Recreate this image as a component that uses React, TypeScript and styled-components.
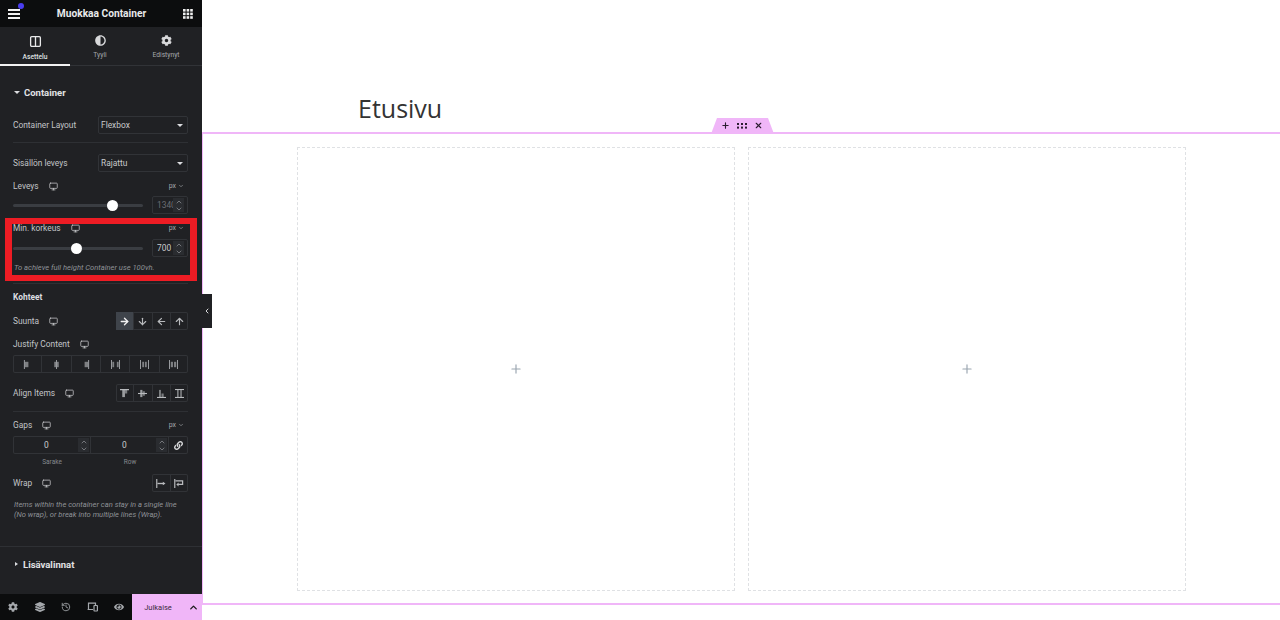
import React from 'react';
import styled, { createGlobalStyle } from 'styled-components';
import { FaAdjust, FaCog, FaEye, FaLayerGroup, FaLink } from 'react-icons/fa';
import {
  ArrowDown,
  ArrowLeft,
  ArrowRight,
  ArrowUp,
  ChevronDown,
  ChevronLeft,
  ChevronUp,
  Columns2,
  History,
  Monitor,
  Plus,
  X,
} from 'lucide-react';

const GlobalStyle = createGlobalStyle`
  html, body { margin: 0; padding: 0; height: 620px; overflow: hidden; background: #fff; }
  * { box-sizing: border-box; }
  body { font-family: Roboto, "Liberation Sans", sans-serif; }
`;

const PINK = '#f0b6f8';
const LINE = '#313337';

const Page = styled.div`
  display: flex;
  width: 1280px;
  height: 620px;
  position: relative;
`;

const Panel = styled.aside`
  width: 202px;
  height: 620px;
  flex: none;
  display: flex;
  flex-direction: column;
  position: relative;
  background: #202124;
  color: #c2c4c7;
  font-size: 8.4px;
`;

const Header = styled.header`
  height: 27px;
  background: #0c0d0e;
  display: flex;
  align-items: center;
  justify-content: space-between;
  padding: 0 9px 0 8px;
  position: relative;
  color: #e8e9ea;
  font-size: 10.2px;
  font-weight: 700;
`;

const Dot = styled.span`
  position: absolute;
  left: 18px;
  top: 3px;
  width: 6px;
  height: 6px;
  border-radius: 50%;
  background: #4a3df0;
`;

const Tabs = styled.nav`
  height: 39px;
  display: grid;
  grid-template-columns: 70px 60px 1fr;
  border-bottom: 1px solid ${LINE};
`;

const Tab = styled.div<{ $active?: boolean }>`
  display: flex;
  flex-direction: column;
  align-items: center;
  padding-top: 8px;
  gap: 5px;
  font-size: 6.7px;
  line-height: 9px;
  color: ${(p) => (p.$active ? '#dfe0e2' : '#a5a8ac')};
  font-weight: ${(p) => (p.$active ? 500 : 400)};
  height: 39px;
  border-bottom: ${(p) => (p.$active ? '2px solid #f2f2f2' : 'none')};
`;

const Body = styled.div`
  flex: 1;
  padding: 0 14px 0 13px;
  display: flex;
  flex-direction: column;
`;

const SectionTitle = styled.div<{ $top: number }>`
  display: flex;
  align-items: center;
  gap: 4px;
  margin-top: ${(p) => p.$top}px;
  height: 14px;
  font-size: 9.5px;
  font-weight: 700;
  color: #e2e3e5;
`;

const Caret = styled.i<{ $dir?: 'down' | 'right' }>`
  width: 0;
  height: 0;
  flex: none;
  ${(p) =>
    p.$dir === 'right'
      ? `border-left: 3px solid #dcdde0; border-top: 2.5px solid transparent; border-bottom: 2.5px solid transparent; margin-left: 2px; margin-right: 1px;`
      : `border-top: 3px solid #dcdde0; border-left: 3px solid transparent; border-right: 3px solid transparent; margin-left: 1px;`}
`;

const Row = styled.div<{ $top: number; $h?: number }>`
  display: flex;
  align-items: center;
  justify-content: space-between;
  margin-top: ${(p) => p.$top}px;
  height: ${(p) => p.$h ?? 18}px;
`;

const Label = styled.span<{ $bold?: boolean }>`
  display: inline-flex;
  align-items: center;
  gap: 10px;
  font-weight: ${(p) => (p.$bold ? 700 : 400)};
  color: ${(p) => (p.$bold ? '#dcdde0' : '#c2c4c7')};
  line-height: 12px;
`;

const Select = styled.div`
  width: 90px;
  height: 18px;
  border: 1px solid ${LINE};
  border-radius: 2px;
  display: flex;
  align-items: center;
  justify-content: space-between;
  padding: 0 4px 0 2px;
  color: #c8cacc;
`;

const Divider = styled.div<{ $top: number }>`
  height: 1px;
  margin-top: ${(p) => p.$top}px;
  background: #2e3034;
`;

const FullDivider = styled(Divider)`
  margin-left: -13px;
  margin-right: -14px;
`;

const Unit = styled.span`
  display: inline-flex;
  align-items: center;
  gap: 2px;
  font-size: 7px;
  color: #a5a8ac;
  margin-right: 4px;
`;

const Track = styled.div`
  width: 130px;
  height: 3px;
  border-radius: 2px;
  background: #3a3d42;
  position: relative;
`;

const Thumb = styled.span`
  position: absolute;
  top: -4px;
  width: 11px;
  height: 11px;
  margin-left: -5.5px;
  border-radius: 50%;
  background: #fff;
`;

const NumberBox = styled.div<{ $dim?: boolean }>`
  width: 36px;
  height: 18px;
  border: 1px solid ${LINE};
  border-radius: 2px;
  display: flex;
  align-items: center;
  padding: 0 3px 0 4px;
  color: ${(p) => (p.$dim ? '#6b6e73' : '#c8cacc')};
`;

const NumberText = styled.span`
  flex: 1;
  min-width: 0;
  overflow: hidden;
  white-space: nowrap;
`;

const Stepper = styled.span`
  flex: none;
  width: 11px;
  height: 14px;
  display: flex;
  flex-direction: column;
  align-items: center;
  justify-content: center;
  background: #2a2c30;
  color: #9a9da1;
  svg { margin: -0.5px 0; }
`;

const Note = styled.p<{ $top: number }>`
  margin: ${(p) => p.$top}px 0 0;
  padding-left: 1px;
  font-size: 7.6px;
  line-height: 10px;
  font-style: italic;
  color: #8f9297;
`;

const Buttons = styled.div<{ $full?: boolean }>`
  display: flex;
  height: 18px;
  width: ${(p) => (p.$full ? '100%' : 'auto')};
  box-shadow: inset 0 0 0 1px ${LINE};
  border-radius: 2px;
`;

const IconButton = styled.span<{ $active?: boolean }>`
  width: 18px;
  flex: 1;
  display: flex;
  align-items: center;
  justify-content: center;
  color: ${(p) => (p.$active ? '#f2f2f2' : '#b9bbbe')};
  background: ${(p) => (p.$active ? '#3f444b' : 'transparent')};
  & + & { border-left: 1px solid ${LINE}; }
`;

const GapRow = styled.div`
  display: grid;
  grid-template-columns: 78px 78px 1fr;
  height: 18px;
  margin-top: 5px;
  box-shadow: inset 0 0 0 1px ${LINE};
  border-radius: 2px;
`;

const GapCell = styled.div`
  display: flex;
  align-items: center;
  justify-content: space-between;
  border-right: 1px solid ${LINE};
  padding: 0 1px 0 31px;
  color: #c8cacc;
`;

const GapLink = styled.div`
  display: flex;
  align-items: center;
  justify-content: center;
  color: #d8d9db;
`;

const GapLabels = styled.div`
  display: grid;
  grid-template-columns: 78px 78px;
  margin-top: 4px;
  text-align: center;
  font-size: 6.5px;
  line-height: 8px;
  color: #85888d;
`;

const Footer = styled.footer`
  height: 26px;
  background: #0c0d0e;
  display: flex;
  align-items: stretch;
  color: #a5a8ac;
`;

const FooterIcons = styled.div`
  width: 132px;
  display: grid;
  grid-template-columns: repeat(5, 1fr);
  align-items: center;
  justify-items: center;
`;

const Publish = styled.div`
  flex: 1;
  display: flex;
  align-items: center;
  justify-content: center;
  background: ${PINK};
  color: #3b2a40;
  font-size: 7.5px;
`;

const PublishMore = styled.div`
  width: 18px;
  display: flex;
  align-items: center;
  justify-content: center;
  background: ${PINK};
  color: #1b1b1b;
`;

const Highlight = styled.div`
  position: absolute;
  left: 5px;
  top: 218px;
  width: 192px;
  height: 63px;
  border: solid #ed1c24;
  border-width: 6px 7px;
  pointer-events: none;
`;

const Collapse = styled.div`
  position: absolute;
  left: 202px;
  top: 294px;
  width: 10px;
  height: 34px;
  background: #202124;
  color: #d8d9db;
  display: flex;
  align-items: center;
  justify-content: center;
  z-index: 2;
`;

const Canvas = styled.main`
  flex: 1;
  display: flex;
  flex-direction: column;
  background: #fff;
`;

const TitleArea = styled.div`
  height: 132px;
  padding: 90px 0 0 156px;
`;

const Title = styled.h1`
  margin: 0;
  font-family: "Open Sans", "Noto Sans", sans-serif;
  font-size: 25px;
  line-height: 36px;
  font-weight: 400;
  color: #333;
`;

const Section = styled.section`
  height: 473px;
  position: relative;
  border-top: 2px solid ${PINK};
  border-bottom: 2px solid ${PINK};
  border-left: 1px solid ${PINK};
  display: flex;
  gap: 13px;
  padding: 13px 0 0 94px;
`;

const SectionHandle = styled.div`
  position: absolute;
  left: 508px;
  top: -16px;
  width: 63px;
  height: 16px;
  padding: 0 2px 1px 0;
  background: ${PINK};
  clip-path: polygon(6px 0, 57px 0, 100% 100%, 0 100%);
  display: flex;
  align-items: center;
  justify-content: center;
  gap: 7px;
  color: #2b1d30;
`;

const Column = styled.div`
  width: 438px;
  height: 444px;
  border: 1px dashed #dfe1e4;
  display: flex;
  align-items: center;
  justify-content: center;
  color: #9aa5b0;
`;

const Device = () => <Monitor size={9} strokeWidth={2} color="#c8cacc" />;

const Steps = () => (
  <Stepper>
    <ChevronUp size={8} strokeWidth={2} />
    <ChevronDown size={8} strokeWidth={2} />
  </Stepper>
);

const Grid3 = () => (
  <svg width="10" height="10" viewBox="0 0 10 10" fill="#eee">
    {[0, 3.6, 7.2].flatMap((y) =>
      [0, 3.6, 7.2].map((x) => <rect key={`${x}-${y}`} x={x} y={y} width="2.6" height="2.6" />),
    )}
  </svg>
);

const Burger = () => (
  <svg width="12" height="10" viewBox="0 0 12 10" fill="#f2f2f2">
    <rect y="0" width="12" height="2" />
    <rect y="4" width="12" height="2" />
    <rect y="8" width="12" height="2" />
  </svg>
);

const Drag = () => (
  <svg width="10" height="6" viewBox="0 0 10 6" fill="currentColor">
    {[0, 4, 8].flatMap((x) =>
      [0, 3.6].map((y) => <rect key={`${x}-${y}`} x={x} y={y} width="2" height="2" />),
    )}
  </svg>
);

// bars + blocks for the justify toggles
const Bars = ({ lines, blocks }: { lines: number[]; blocks: number[][] }) => (
  <svg width="9" height="9" viewBox="0 0 10 10" fill="#a6a9ad">
    {lines.map((x) => (
      <rect key={x} x={x} y="0" width="1" height="10" />
    ))}
    {blocks.map(([x, w]) => (
      <rect key={x} x={x} y="2" width={w} height="6" opacity=".7" />
    ))}
  </svg>
);

const AlignIcon = ({ kind }: { kind: 'start' | 'center' | 'end' | 'stretch' }) => (
  <svg width="9" height="9" viewBox="0 0 10 10" fill="currentColor">
    {kind === 'start' && (
      <>
        <rect width="10" height="1.4" />
        <rect x="2.5" y="1" width="3" height="8" opacity=".8" />
        <rect x="5.5" y="1" width="2.5" height="4" opacity=".6" />
      </>
    )}
    {kind === 'center' && (
      <>
        <rect y="4.4" width="10" height="1.2" />
        <rect x="2.5" y="1" width="2.4" height="8" opacity=".8" />
        <rect x="5.2" y="2.5" width="2.4" height="5" opacity=".6" />
      </>
    )}
    {kind === 'end' && (
      <>
        <rect y="8.8" width="10" height="1.2" />
        <rect x="2.5" y="1" width="1.6" height="8" opacity=".8" />
        <rect x="5" y="5" width="2.4" height="4" opacity=".6" />
      </>
    )}
    {kind === 'stretch' && (
      <>
        <rect width="10" height="1.2" />
        <rect y="8.8" width="10" height="1.2" />
        <rect x="2.5" y="1" width="1.4" height="8" opacity=".8" />
        <rect x="6" y="1" width="1.4" height="8" opacity=".8" />
      </>
    )}
  </svg>
);

const WrapOff = () => (
  <svg width="10" height="9" viewBox="0 0 11 10" fill="none" stroke="currentColor">
    <path d="M.8 0v10" strokeWidth="1.3" />
    <path d="M1.5 5h7" strokeWidth="1.5" />
    <path d="M7.5 3l3 2-3 2z" fill="currentColor" stroke="none" />
  </svg>
);

const WrapOn = () => (
  <svg width="10" height="9" viewBox="0 0 11 10" fill="none" stroke="currentColor">
    <path d="M.8 0v10" strokeWidth="1.3" />
    <path d="M1.5 2h8v4H4.5" strokeWidth="1.4" />
    <path d="M5 3.8L2.5 6 5 8.2z" fill="currentColor" stroke="none" />
  </svg>
);

const Devices = () => (
  <svg width="11" height="10" viewBox="0 0 11 10" fill="none" stroke="currentColor" strokeWidth="1.2">
    <path d="M6 7.5H.6M1.5 7V1.2h7V3" />
    <rect x="7" y="3.5" width="3.4" height="5.5" rx=".4" />
  </svg>
);

const justify = [
  { lines: [1], blocks: [[2, 4]] },
  { lines: [4.5], blocks: [[2.5, 2], [5.5, 2]] },
  { lines: [8], blocks: [[4, 4]] },
  { lines: [0, 9], blocks: [[1.5, 2], [6.5, 2]] },
  { lines: [0, 9], blocks: [[2.5, 2], [5.5, 2]] },
  { lines: [0, 9], blocks: [[2, 2.4], [5.6, 2.4]] },
];

export default function App() {
  return (
    <Page>
      <GlobalStyle />
      <Panel>
        <Header>
          <Burger />
          <Dot />
          <span>Muokkaa Container</span>
          <Grid3 />
        </Header>
        <Tabs>
          <Tab $active>
            <Columns2 size={13} strokeWidth={2.4} color="#e8e9ea" />
            Asettelu
          </Tab>
          <Tab>
            <FaAdjust size={11} color="#d8d9db" />
            Tyyli
          </Tab>
          <Tab>
            <FaCog size={11} color="#d8d9db" />
            Edistynyt
          </Tab>
        </Tabs>
        <Body>
          <SectionTitle $top={19}>
            <Caret />
            Container
          </SectionTitle>
          <Row $top={17}>
            <Label>Container Layout</Label>
            <Select>
              Flexbox
              <Caret />
            </Select>
          </Row>
          <Divider $top={8} />
          <Row $top={11}>
            <Label>Sisällön leveys</Label>
            <Select>
              Rajattu
              <Caret />
            </Select>
          </Row>
          <Row $top={8} $h={12}>
            <Label>
              Leveys <Device />
            </Label>
            <Unit>
              px <ChevronDown size={6} strokeWidth={2.5} />
            </Unit>
          </Row>
          <Row $top={4}>
            <Track>
              <Thumb style={{ left: '76.7%' }} />
            </Track>
            <NumberBox $dim>
              <NumberText>1340</NumberText>
              <Steps />
            </NumberBox>
          </Row>
          <Row $top={8} $h={12}>
            <Label>
              Min. korkeus <Device />
            </Label>
            <Unit>
              px <ChevronDown size={6} strokeWidth={2.5} />
            </Unit>
          </Row>
          <Row $top={5}>
            <Track>
              <Thumb style={{ left: '48.7%' }} />
            </Track>
            <NumberBox>
              <NumberText>700</NumberText>
              <Steps />
            </NumberBox>
          </Row>
          <Note $top={6}>To achieve full height Container use 100vh.</Note>
          <Divider $top={10} />
          <Row $top={7} $h={12}>
            <Label $bold>Kohteet</Label>
          </Row>
          <Row $top={9}>
            <Label>
              Suunta <Device />
            </Label>
            <Buttons>
              <IconButton $active>
                <ArrowRight size={11} strokeWidth={3} />
              </IconButton>
              <IconButton>
                <ArrowDown size={11} strokeWidth={2.5} />
              </IconButton>
              <IconButton>
                <ArrowLeft size={11} strokeWidth={2.5} />
              </IconButton>
              <IconButton>
                <ArrowUp size={11} strokeWidth={2.5} />
              </IconButton>
            </Buttons>
          </Row>
          <Row $top={8} $h={12}>
            <Label>
              Justify Content <Device />
            </Label>
          </Row>
          <Row $top={5}>
            <Buttons $full>
              {justify.map((j, i) => (
                <IconButton key={i}>
                  <Bars lines={j.lines} blocks={j.blocks} />
                </IconButton>
              ))}
            </Buttons>
          </Row>
          <Row $top={11}>
            <Label>
              Align Items <Device />
            </Label>
            <Buttons>
              <IconButton>
                <AlignIcon kind="start" />
              </IconButton>
              <IconButton>
                <AlignIcon kind="center" />
              </IconButton>
              <IconButton>
                <AlignIcon kind="end" />
              </IconButton>
              <IconButton>
                <AlignIcon kind="stretch" />
              </IconButton>
            </Buttons>
          </Row>
          <Divider $top={9} />
          <Row $top={7} $h={12}>
            <Label>
              Gaps <Device />
            </Label>
            <Unit>
              px <ChevronDown size={6} strokeWidth={2.5} />
            </Unit>
          </Row>
          <GapRow>
            <GapCell>
              0
              <Steps />
            </GapCell>
            <GapCell>
              0
              <Steps />
            </GapCell>
            <GapLink>
              <FaLink size={9} />
            </GapLink>
          </GapRow>
          <GapLabels>
            <span>Sarake</span>
            <span>Row</span>
          </GapLabels>
          <Row $top={8}>
            <Label>
              Wrap <Device />
            </Label>
            <Buttons>
              <IconButton>
                <WrapOff />
              </IconButton>
              <IconButton>
                <WrapOn />
              </IconButton>
            </Buttons>
          </Row>
          <Note $top={8}>
            Items within the container can stay in a single line (No wrap), or break into multiple lines (Wrap).
          </Note>
          <FullDivider $top={26} />
          <SectionTitle $top={10}>
            <Caret $dir="right" />
            Lisävalinnat
          </SectionTitle>
        </Body>
        <Footer>
          <FooterIcons>
            <FaCog size={10} />
            <FaLayerGroup size={10} />
            <History size={10} strokeWidth={2} />
            <Devices />
            <FaEye size={10} />
          </FooterIcons>
          <Publish>Julkaise</Publish>
          <PublishMore>
            <ChevronUp size={11} strokeWidth={3} />
          </PublishMore>
        </Footer>
        <Highlight />
      </Panel>
      <Collapse>
        <ChevronLeft size={8} strokeWidth={3} />
      </Collapse>
      <Canvas>
        <TitleArea>
          <Title>Etusivu</Title>
        </TitleArea>
        <Section>
          <SectionHandle>
            <Plus size={9} strokeWidth={3} />
            <Drag />
            <X size={9} strokeWidth={3} />
          </SectionHandle>
          <Column>
            <Plus size={14} strokeWidth={2} />
          </Column>
          <Column>
            <Plus size={14} strokeWidth={2} />
          </Column>
        </Section>
      </Canvas>
    </Page>
  );
}
